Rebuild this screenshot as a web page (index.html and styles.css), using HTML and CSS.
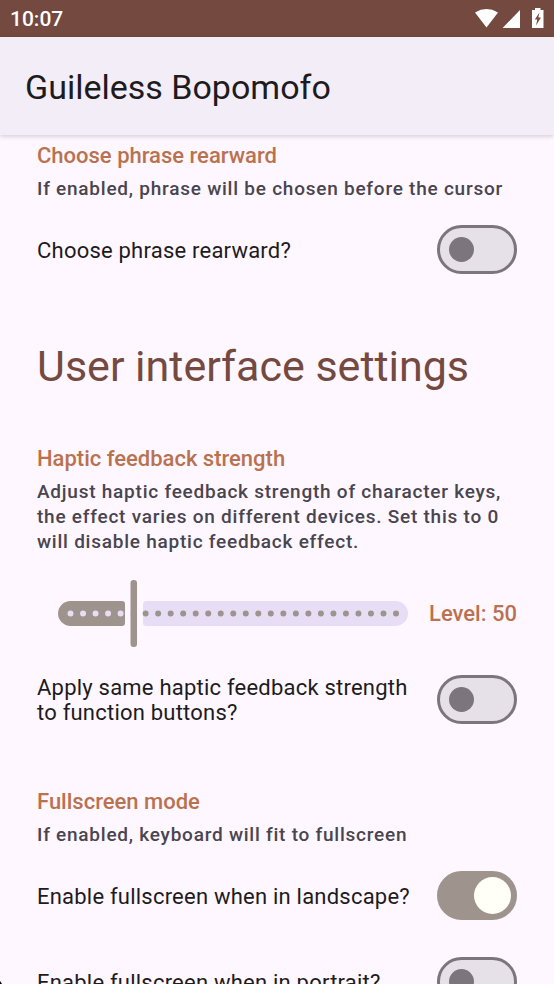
FILE: index.html
```html
<!DOCTYPE html>
<html lang="en">
<head>
<meta charset="utf-8">
<meta name="viewport" content="width=device-width, initial-scale=1">
<title>Guileless Bopomofo</title>
<link rel="stylesheet" href="styles.css">
</head>
<body>
<div class="status">
  <span>10:07</span>
  <svg class="status-icons" width="72" height="22" viewBox="0 0 72 22" fill="#fff" aria-hidden="true">
    <path d="M1 4.4Q12.500-2.400 24 4.400L12.500 19.500Z"/>
    <path d="M46 2V20H28.600Z"/>
    <path fill-rule="evenodd" d="M61 0h5.500v2h3v18H58V2h3ZM65.500 4.500l-4.700 7h2.500L62 17.500l5-8h-2.700Z"/>
  </svg>
</div>
<header class="appbar"><h1>Guileless Bopomofo</h1></header>
<main class="content">
  <section class="group">
    <h3>Choose phrase rearward</h3>
    <p class="hint">If enabled, phrase will be chosen before the cursor</p>
    <div class="row">
      <label for="rearward">Choose phrase rearward?</label>
      <input class="switch" type="checkbox" role="switch" id="rearward">
    </div>
  </section>
  <h2>User interface settings</h2>
  <section class="group">
    <h3 id="haptic-title">Haptic feedback strength</h3>
    <p class="hint">Adjust haptic feedback strength of character keys, the effect varies on different devices. Set this to 0 will disable haptic feedback effect.</p>
    <div class="slider-row">
      <div class="slider">
        <svg viewBox="0 0 350 67" aria-hidden="true">
          <path fill="#9e938d" d="M12.500 21H64a3 3 0 0 1 3 3V43a3 3 0 0 1-3 3H12.500a12.500 12.500 0 0 1 0-25Z"/>
          <path fill="#e7def6" d="M88 21H337.500a12.500 12.500 0 0 1 0 25H88a3 3 0 0 1-3-3V24a3 3 0 0 1 3-3Z"/>
          <path class="ticks" stroke="#e7def6" d="M12.500 33.500H75.300"/>
          <path class="ticks" stroke="#9e938d" d="M87.600 33.500H339"/>
          <rect x="72.500" width="6.500" height="67" rx="3" fill="#9e938d"/>
        </svg>
        <input type="range" min="0" max="260" step="10" value="50" aria-labelledby="haptic-title">
      </div>
      <output>Level: 50</output>
    </div>
    <div class="row">
      <label for="same">Apply same haptic feedback strength to function buttons?</label>
      <input class="switch" type="checkbox" role="switch" id="same">
    </div>
  </section>
  <section class="group">
    <h3>Fullscreen mode</h3>
    <p class="hint">If enabled, keyboard will fit to fullscreen</p>
    <div class="row">
      <label for="landscape">Enable fullscreen when in landscape?</label>
      <input class="switch" type="checkbox" role="switch" id="landscape" checked>
    </div>
    <div class="row">
      <label for="portrait">Enable fullscreen when in portrait?</label>
      <input class="switch" type="checkbox" role="switch" id="portrait">
    </div>
  </section>
</main>
</body>
</html>
```
FILE: styles.css
```css
* { box-sizing: border-box; }
body {
  margin: 0;
  height: 100vh;
  display: flex;
  flex-direction: column;
  overflow: hidden;
  background: #fef7ff;
  color: #1d1b20;
  font-family: Roboto, sans-serif;
}
/* rounded screen corner */
body::after {
  content: "";
  position: absolute;
  left: 0;
  bottom: 0;
  width: 2px;
  height: 3px;
  background: #000;
  clip-path: polygon(0 0, 100% 100%, 0 100%);
}
h1, h2, h3, p { margin: 0; }
.status {
  flex: none;
  height: 37px;
  padding: 0 8px 0 10px;
  display: flex;
  align-items: center;
  justify-content: space-between;
  background: #74493f;
  color: #fff;
  font-size: 21px;
  font-weight: 500;
}
.appbar {
  flex: none;
  height: 98px;
  padding: 2px 25px 0;
  display: flex;
  align-items: center;
  background: #f3edf7;
  box-shadow: 0 1px 5px rgba(0, 0, 0, 0.2);
  z-index: 1;
}
h1 { font-size: 34px; line-height: 43px; font-weight: 400; }
.content {
  flex: 1;
  min-height: 0;
  overflow-y: auto;
  scrollbar-width: none;
  padding: 5px 37px;
}
.group { margin-bottom: 61px; }
h2 {
  margin: 65px 0 49px;
  font-size: 43px;
  line-height: 55px;
  font-weight: 400;
  color: #74493f;
}
h3, output {
  font-size: 22px;
  line-height: 31px;
  font-weight: 500;
  color: #b9724f;
}
h3 { margin-bottom: 5px; }
.hint {
  font-size: 19px;
  line-height: 25px;
  font-weight: 500;
  letter-spacing: 0.04em;
  color: #49454f;
}
.row {
  display: flex;
  align-items: center;
  justify-content: space-between;
  gap: 20px;
  min-height: 49px;
  margin-top: 24px;
}
.row + .row { margin-top: 37px; }
.row label {
  padding-top: 2px;
  font-size: 22px;
  line-height: 25px;
  letter-spacing: 0.01em;
}
.switch {
  appearance: none;
  flex: none;
  display: flex;
  align-items: center;
  width: 80px;
  height: 49px;
  margin: 0;
  padding-left: 9px;
  border: 3px solid #7c757e;
  border-radius: 25px;
  background: #e6e0e9;
}
.switch::before {
  content: "";
  width: 25px;
  height: 25px;
  border-radius: 50%;
  background: #7c757e;
}
.switch:checked {
  justify-content: flex-end;
  padding: 0 3px;
  border-color: #9e938d;
  background: #9e938d;
}
.switch:checked::before { width: 37px; height: 37px; background: #fffff8; }
.slider-row {
  display: flex;
  align-items: center;
  gap: 21px;
  margin: 26px 0;
  padding-left: 21px;
}
.slider { position: relative; flex: 1; }
.slider svg { display: block; width: 100%; }
.ticks { fill: none; stroke-width: 6; stroke-linecap: round; stroke-dasharray: 0 12.52; }
.slider input {
  position: absolute;
  inset: 0;
  width: 100%;
  height: 100%;
  margin: 0;
  opacity: 0;
}
```
